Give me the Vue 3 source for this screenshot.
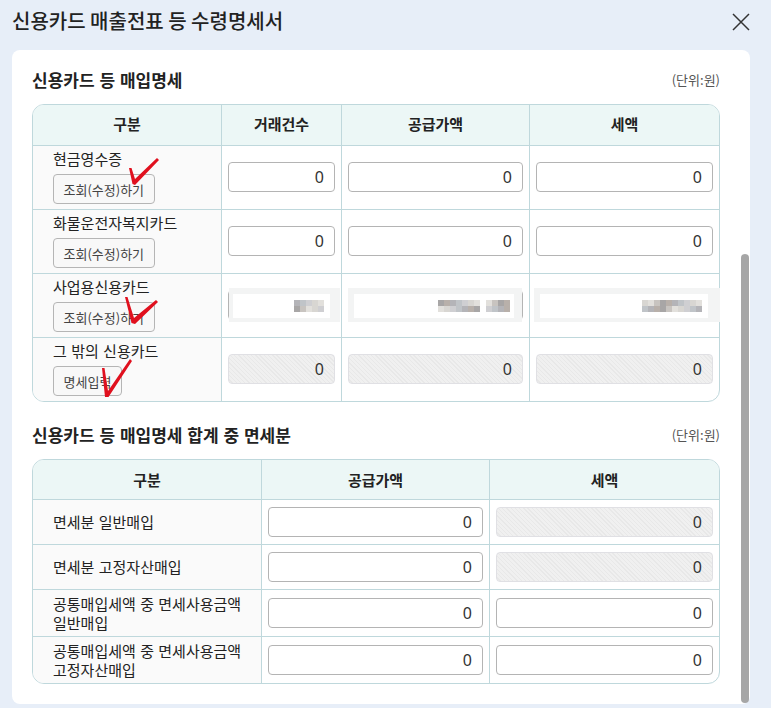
<script setup>
const purchaseRows = [
  { label: '현금영수증', button: '조회(수정)하기', disabled: false },
  { label: '화물운전자복지카드', button: '조회(수정)하기', disabled: false },
  { label: '사업용신용카드', button: '조회(수정)하기', disabled: false },
  { label: '그 밖의 신용카드', button: '명세입력', disabled: true }
]
const exemptRows = [
  { label: ['면세분 일반매입'], disabled: true },
  { label: ['면세분 고정자산매입'], disabled: true },
  { label: ['공통매입세액 중 면세사용금액', '일반매입'], disabled: false },
  { label: ['공통매입세액 중 면세사용금액', '고정자산매입'], disabled: false }
]
const patches = [
  { x: 229, w: 111, ix: 233, iw: 97 },
  { x: 348, w: 174, ix: 354, iw: 160 },
  { x: 534, w: 186, ix: 540, iw: 168 }
]
const shades = ['#c8c4c0', '#b4b4b8', '#d8d6d2', '#a8a6a6', '#c0c4c8', '#e2e0dc', '#b8b0aa', '#cfcfd2']
const blocks = []
function mosaic(startX, count, y, seed) {
  for (let i = 0; i < count; i++) {
    blocks.push({ x: startX + i * 6, y, fill: shades[(i * 3 + seed) % shades.length] })
    blocks.push({ x: startX + i * 6, y: y + 6, fill: shades[(i * 5 + seed + 2) % shades.length] })
  }
}
mosaic(294, 5, 300, 1)
mosaic(438, 7, 300, 3)
mosaic(486, 4, 300, 5)
mosaic(642, 10, 300, 2)
</script>

<template>
  <div class="page">
    <header class="top">
      <h1 class="title">신용카드 매출전표 등 수령명세서</h1>
      <svg class="close" width="18" height="18" viewBox="0 0 18 18" aria-label="닫기">
        <path d="M1 1 L17 17 M17 1 L1 17" stroke="#333" stroke-width="1.5" fill="none" />
      </svg>
    </header>

    <main class="card">
      <div class="section-head">
        <h2 class="section-title">신용카드 등 매입명세</h2>
        <span class="unit">(단위:원)</span>
      </div>
      <div class="grid grid-four">
        <div class="cell head first">구분</div>
        <div class="cell head">거래건수</div>
        <div class="cell head">공급가액</div>
        <div class="cell head">세액</div>
        <template v-for="row in purchaseRows" :key="row.label">
          <div class="cell first label-stack">
            <span class="label">{{ row.label }}</span>
            <button class="action" type="button">{{ row.button }}</button>
          </div>
          <div v-for="n in 3" :key="n" class="cell field">
            <input class="num" :class="{ off: row.disabled }" value="0" readonly />
          </div>
        </template>
      </div>

      <div class="section-head second">
        <h2 class="section-title">신용카드 등 매입명세 합계 중 면세분</h2>
        <span class="unit">(단위:원)</span>
      </div>
      <div class="grid grid-three">
        <div class="cell head first">구분</div>
        <div class="cell head">공급가액</div>
        <div class="cell head">세액</div>
        <template v-for="(row, i) in exemptRows" :key="i">
          <div class="cell first label-single">
            <span v-for="line in row.label" :key="line" class="line">{{ line }}</span>
          </div>
          <div class="cell field">
            <input class="num" value="0" readonly />
          </div>
          <div class="cell field">
            <input class="num" :class="{ off: row.disabled }" value="0" readonly />
          </div>
        </template>
      </div>

      <div class="scroll-thumb"></div>
    </main>

    <svg class="overlay" width="771" height="708" viewBox="0 0 771 708">
      <g v-for="p in patches" :key="p.x">
        <rect :x="p.x" y="288" :width="p.w" height="34" fill="#f3f4f4" />
        <rect :x="p.ix" y="294" :width="p.iw" height="24" fill="#fff" />
      </g>
      <rect v-for="(b, i) in blocks" :key="i" :x="b.x" :y="b.y" width="6" height="6" :fill="b.fill" />
      <path class="check" d="M129 168 L131.5 168 L135 179 L157 158 L159 160 L135 185 L132.5 184 Z" />
      <path class="check" d="M125 297 L127.5 297 L134 318 L156 300 L158 302 L135 324 L131.5 323 Z" />
      <path class="check" d="M102 368 L104.5 368 L108 391 L130 359 L132 361 L108.5 397 L105 397 Z" />
    </svg>
  </div>
</template>

<style>
html,
body {
  margin: 0;
  background: #e7eef8;
}
</style>

<style scoped>
.page {
  position: relative;
  width: 771px;
  height: 708px;
  overflow: hidden;
  background: #e7eef8;
  font-family: "Noto Sans CJK KR", "Noto Sans", sans-serif;
  color: #222;
  word-spacing: 1px;
}
.top {
  height: 50px;
  box-sizing: border-box;
  padding: 0 21px 6px 12px;
  display: flex;
  align-items: center;
  justify-content: space-between;
}
.title {
  margin: 0 0 3px;
  font-size: 20px;
  font-weight: 500;
  line-height: 30px;
  color: #222;
  word-spacing: 0;
}
.close {
  display: block;
}
.card {
  position: relative;
  box-sizing: border-box;
  width: 738px;
  height: 654px;
  margin-left: 12px;
  padding: 18px 30px 0 20px;
  background: #fff;
  border-radius: 8px;
}
.section-head {
  height: 26px;
  margin-bottom: 10px;
  padding-bottom: 3px;
  box-sizing: border-box;
  display: flex;
  align-items: center;
  justify-content: space-between;
}
.section-head.second {
  margin-top: 21px;
}
.section-title {
  margin: 0;
  font-size: 17px;
  font-weight: 700;
  color: #222;
}
.unit {
  font-size: 13px;
  color: #555;
}
.grid {
  display: grid;
  border: 1px solid #bfd8dc;
  border-radius: 12px;
  overflow: hidden;
  background: #fff;
}
.grid-four {
  grid-template-columns: 188px 120px 188px 1fr;
  grid-template-rows: 40px 64px 64px 64px 64px;
}
.grid-three {
  grid-template-columns: 228px 228px 1fr;
  grid-template-rows: 39px 45px 45px 47px 47px;
}
.cell {
  box-sizing: border-box;
  border-left: 1px solid #bfd8dc;
  border-top: 1px solid #bfd8dc;
}
.cell.first {
  border-left: 0;
  background: #fafafa;
}
.cell.head {
  border-top: 0;
  background: #ecf7f6;
  font-size: 15px;
  font-weight: 700;
  display: flex;
  align-items: center;
  justify-content: center;
}
.grid-four .cell.head {
  padding-bottom: 3px;
}
.grid-three .cell.head {
  padding-bottom: 1px;
}
.label-stack {
  display: flex;
  flex-direction: column;
  align-items: flex-start;
  padding: 3px 0 0 20px;
}
.label {
  font-size: 15px;
  line-height: 20px;
  margin-bottom: 5px;
}
.action {
  height: 30px;
  padding: 0 9.5px;
  box-sizing: border-box;
  border: 1px solid #b5b5b5;
  border-radius: 4px;
  background: #f8f8f8;
  color: #444;
  font: 400 13px "Noto Sans CJK KR", sans-serif;
  white-space: nowrap;
}
.field {
  display: flex;
  align-items: center;
  padding: 0 6px;
}
.grid-four .field {
  padding-bottom: 1px;
}
.num {
  width: 100%;
  height: 30px;
  box-sizing: border-box;
  padding: 0 10px;
  border: 1px solid #b4b4b4;
  border-radius: 4px;
  outline: none;
  background: #fff;
  color: #333;
  text-align: right;
  font: 400 16px "Noto Sans", sans-serif;
}
.num.off {
  border-color: #e0e0e4;
  background: repeating-linear-gradient(45deg, #f0f0f0 0 2px, #e8e8e8 2px 3px);
}
.label-single {
  display: flex;
  flex-direction: column;
  justify-content: center;
  padding: 0 0 1px 20px;
  font-size: 15px;
  line-height: 19px;
}
.line {
  display: block;
}
.scroll-thumb {
  position: absolute;
  left: 729px;
  top: 204px;
  width: 8px;
  height: 449px;
  border-radius: 4px;
  background: #a6a6a6;
}
.overlay {
  position: absolute;
  left: 0;
  top: 0;
  pointer-events: none;
}
.check {
  fill: #e0101e;
}
</style>
